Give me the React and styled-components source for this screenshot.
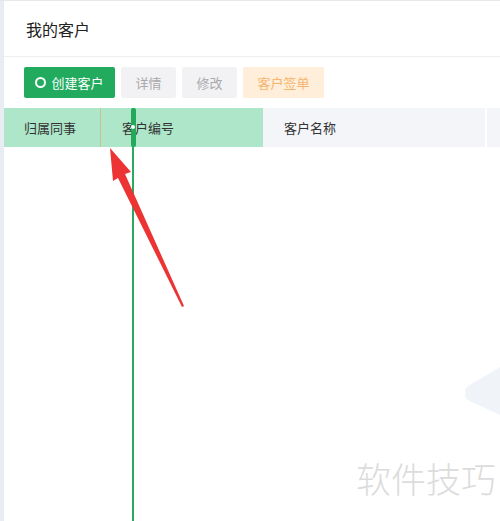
import React from 'react';
import styled, { createGlobalStyle } from 'styled-components';

const GlobalStyle = createGlobalStyle`
  html, body {
    margin: 0;
    padding: 0;
    background: #fff;
  }
  body {
    font-family: "Noto Sans CJK SC", "Noto Sans", sans-serif;
    color: #333;
  }
`;

const Page = styled.div`
  position: relative;
  display: flex;
  width: 500px;
  height: 521px;
  overflow: hidden;
  border-top: 1px solid #e6e8ec;
  box-sizing: border-box;
`;

const SideStrip = styled.div`
  width: 4px;
  flex: none;
  background: #e9ecf3;
`;

const Main = styled.div`
  flex: 1;
  display: flex;
  flex-direction: column;
  min-width: 0;
`;

const Header = styled.div`
  height: 55px;
  display: flex;
  align-items: center;
  padding-left: 22px;
  border-bottom: 1px solid #eceef1;
  font-size: 16px;
  color: #222;
`;

const Toolbar = styled.div`
  display: flex;
  gap: 6px;
  padding: 10px 0 10px 20px;
`;

const Button = styled.div`
  height: 31px;
  display: flex;
  align-items: center;
  justify-content: center;
  gap: 5px;
  width: ${({ $w }) => $w}px;
  font-size: 13px;
  border-radius: 2px;
  background: ${({ $bg }) => $bg};
  color: ${({ $fg }) => $fg};
`;

const Ring = styled.span`
  width: 7px;
  height: 7px;
  border: 2px solid #fff;
  border-radius: 50%;
`;

const TableHead = styled.div`
  display: grid;
  grid-template-columns: 97px 162px 224px 1fr;
  height: 39px;
  font-size: 13px;
  color: #333;
`;

const HeadCell = styled.div`
  display: flex;
  align-items: center;
  padding-left: ${({ $pad }) => $pad}px;
  background: ${({ $green }) => ($green ? '#ade6c9' : '#f4f5f9')};
  border-right: ${({ $line }) => $line || 'none'};
`;

const Body = styled.div`
  flex: 1;
`;

const ResizeLine = styled.div`
  position: absolute;
  left: 132px;
  top: 107px;
  bottom: 0;
  width: 2px;
  background: #2aaa60;

  &::before {
    content: '';
    position: absolute;
    left: -1.5px;
    top: 0;
    width: 5px;
    height: 39px;
    border-radius: 2px;
    background: #22a95b;
  }

  &::after {
    content: '';
    position: absolute;
    left: -1px;
    top: 17px;
    width: 4px;
    height: 4px;
    border-radius: 50%;
    background: #fff;
  }
`;

const Overlay = styled.svg`
  position: absolute;
  left: 0;
  top: 0;
  pointer-events: none;
`;

const Watermark = styled.div`
  position: absolute;
  right: 4px;
  bottom: 18px;
  font-size: 35px;
  font-weight: 300;
  color: #dcdcdc;
`;

const App = () => {
  const columns = [
    { label: '归属同事', green: true, pad: 20, line: '1px solid #cdbf8e' },
    { label: '客户编号', green: true, pad: 21 },
    { label: '客户名称', pad: 21, line: '2px solid #fff' },
    { label: '' },
  ];

  return (
    <Page>
      <GlobalStyle />
      <SideStrip />
      <Main>
        <Header>我的客户</Header>
        <Toolbar>
          <Button $w={91} $bg="#22ab5f" $fg="#fff">
            <Ring />
            创建客户
          </Button>
          <Button $w={55} $bg="#f2f2f4" $fg="#a9a9ad">详情</Button>
          <Button $w={55} $bg="#f2f2f4" $fg="#a9a9ad">修改</Button>
          <Button $w={81} $bg="#ffeed9" $fg="#f7b56f">客户签单</Button>
        </Toolbar>
        <TableHead>
          {columns.map((c, i) => (
            <HeadCell key={i} $green={c.green} $pad={c.pad} $line={c.line}>
              {c.label}
            </HeadCell>
          ))}
        </TableHead>
        <Body />
      </Main>

      <ResizeLine />

      <Overlay width="500" height="521" viewBox="0 0 500 521">
        <path d="M466 392 Q463 389 468 385 L500 366 L500 414 L468 399 Q463 396 466 392 Z" fill="#f0f3f8" />
        <polygon
          points="110,147 131,171 125,173 184,305 182,306 118,177 113,180"
          fill="#ec3434"
        />
      </Overlay>

      <Watermark>软件技巧</Watermark>
    </Page>
  );
};

export default App;
